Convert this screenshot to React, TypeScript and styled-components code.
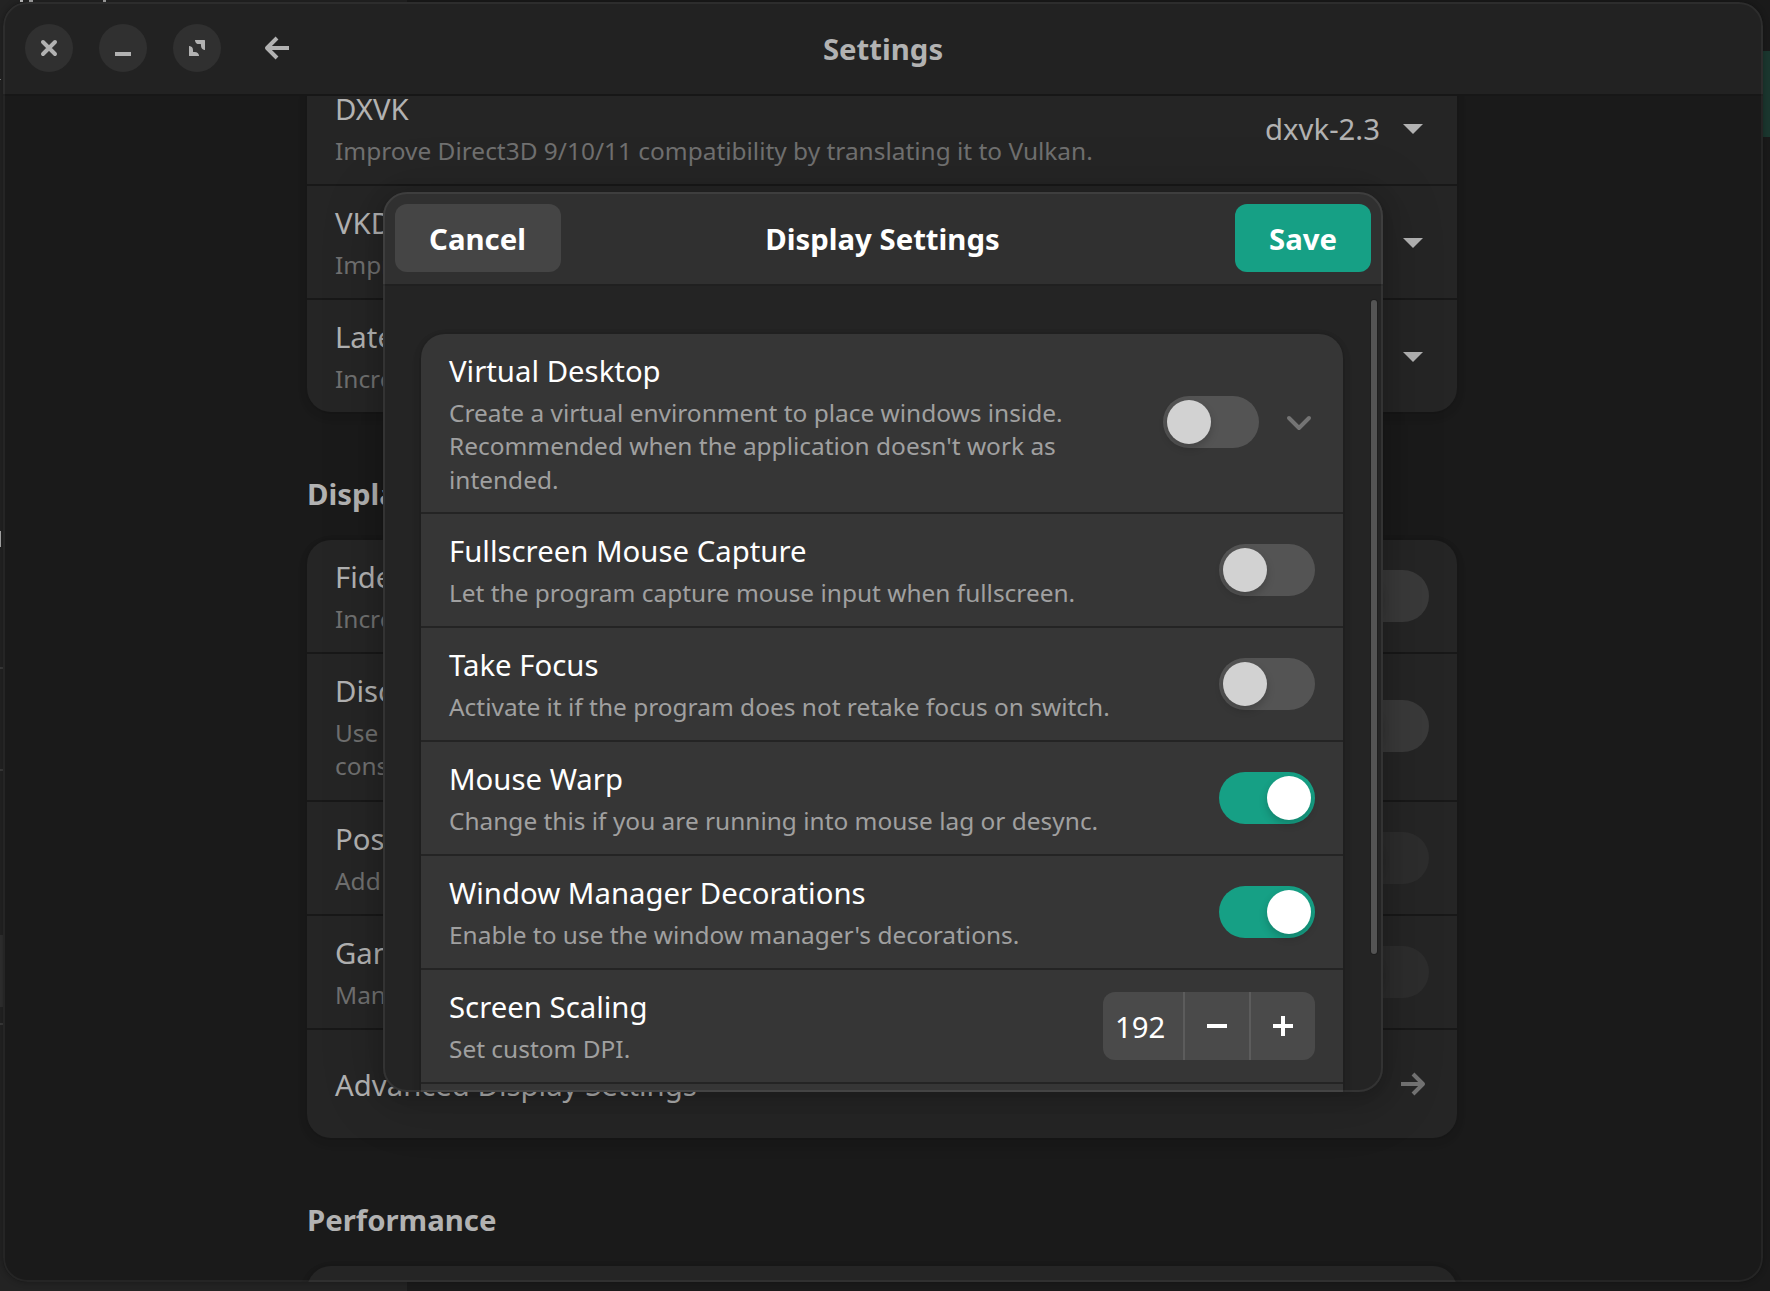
import React from "react";
import styled, { createGlobalStyle, css } from "styled-components";

const Global = createGlobalStyle`
  *, *::before, *::after { box-sizing: border-box; }
  body {
    margin: 0;
    background: #1b1b1b;
    font-family: "Noto Sans", "Open Sans", sans-serif;
    font-size: 29.33px;
    line-height: 40px;
    color: #fff;
    overflow: hidden;
  }
  button { font: inherit; color: inherit; border: 0; margin: 0; }
`;

const Desktop = styled.div`
  position: relative;
  width: 1770px;
  height: 1291px;
  padding: 2px 7px 9px 3px;
  overflow: hidden;
  background: linear-gradient(90deg, #232323 407px, #1a1a1a 407px);
`;

const Scrap = styled.span<{ $x: number; $y: number; $w: number; $h: number; $c: string }>`
  position: absolute;
  left: ${(p) => p.$x}px;
  top: ${(p) => p.$y}px;
  width: ${(p) => p.$w}px;
  height: ${(p) => p.$h}px;
  background: ${(p) => p.$c};
`;

const Window = styled.div`
  position: relative;
  display: flex;
  flex-direction: column;
  height: 1280px;
  border-radius: 24px;
  overflow: hidden;
  background: #1a1a1a;
  box-shadow: 0 0 6px rgba(0, 0, 0, 0.3);
  &::after {
    content: "";
    position: absolute;
    inset: 0;
    border-radius: 24px;
    border: 2px solid rgba(255, 255, 255, 0.05);
    pointer-events: none;
  }
`;

const HeaderBar = styled.header`
  display: grid;
  grid-template-columns: 1fr auto 1fr;
  align-items: center;
  flex: none;
  height: 94px;
  padding: 0 22px;
  border-bottom: 2px solid #171717;
  background: #222222;
  color: #b2b2b2;
`;

const Controls = styled.div`
  display: flex;
  align-items: center;
  gap: 26px;
`;

const RoundButton = styled.button`
  display: grid;
  place-items: center;
  width: 48px;
  height: 48px;
  padding: 0;
  border-radius: 50%;
  background: #303030;
`;

const FlatButton = styled(RoundButton)`
  margin-left: 6px;
  background: none;
`;

const Title = styled.h1`
  margin: 0;
  padding-top: 2px;
  font-size: inherit;
  font-weight: 700;
`;

const PageClip = styled.div`
  flex: 1;
  min-height: 0;
  overflow: hidden;
`;

const Page = styled.main`
  display: flow-root;
  width: 1150px;
  margin: -24px 0 0 304px;
  color: #b2b2b2;
`;

const Heading = styled.h2`
  margin: 62px 0 26px;
  font-size: inherit;
  font-weight: 700;
`;

const List = styled.section<{ $dim?: boolean }>`
  border-radius: 24px;
  overflow: hidden;
  background: ${(p) => (p.$dim ? "#252525" : "#363636")};
  box-shadow: 0 0 0 2px rgba(0, 0, 0, 0.03), 0 2px 6px 2px rgba(0, 0, 0, 0.06),
    0 4px 12px 4px rgba(0, 0, 0, 0.02);
  --line: ${(p) => (p.$dim ? "#181818" : "#242424")};
  --sub: ${(p) => (p.$dim ? "#707070" : "#a0a0a0")};
`;

const Row = styled.div<{ $h?: number; $raised?: boolean }>`
  display: flex;
  align-items: center;
  gap: 24px;
  box-sizing: content-box;
  height: ${(p) => (p.$h ?? 112) - (p.$raised ? 2 : 0)}px;
  padding: 0 28px ${(p) => (p.$raised ? 2 : 0)}px;
  &:not(:first-child) {
    border-top: 2px solid var(--line);
  }
`;

const Labels = styled.div<{ $single?: boolean }>`
  display: flex;
  flex-direction: column;
  flex: 1;
  gap: 5px;
  min-width: 0;
  ${(p) =>
    p.$single
      ? css`
          padding-top: 2px;
        `
      : css`
          align-self: flex-start;
          padding-top: 17px;
        `}
`;

const Subtitle = styled.div`
  font-size: 24.44px;
  line-height: 33.3px;
  color: var(--sub);
  white-space: pre;
`;

const Track = styled.button<{ $on?: boolean; $tone: "live" | "dim" | "off" }>`
  display: flex;
  flex: none;
  justify-content: ${(p) => (p.$on ? "flex-end" : "flex-start")};
  width: 96px;
  height: 52px;
  padding: 4px;
  border-radius: 26px;
  background: ${(p) =>
    p.$on ? "#16a085" : { live: "#545454", dim: "#3a3a3a", off: "#2d2d2d" }[p.$tone]};
`;

const Knob = styled.span<{ $on?: boolean }>`
  width: 44px;
  height: 44px;
  border-radius: 50%;
  background: ${(p) => (p.$on ? "#fff" : "#d2d2d2")};
  box-shadow: 0 4px 8px rgba(0, 0, 0, 0.2);
`;

const Overlay = styled.div`
  position: absolute;
  inset: 0;
  display: grid;
  place-items: center;
`;

const Dialog = styled.div`
  position: relative;
  display: flex;
  flex-direction: column;
  width: 1000px;
  height: 900px;
  border-radius: 24px;
  overflow: hidden;
  background: #242424;
`;

const DialogShadow = styled.div`
  position: relative;
  border-radius: 24px;
  box-shadow: 0 4px 16px 4px rgba(0, 0, 0, 0.14), 0 6px 56px 10px rgba(0, 0, 0, 0.13);
  &::after {
    content: "";
    position: absolute;
    inset: 0;
    border-radius: 24px;
    border: 2px solid rgba(255, 255, 255, 0.07);
    pointer-events: none;
  }
`;

const DialogBar = styled.header`
  display: grid;
  grid-template-columns: 1fr auto 1fr;
  align-items: center;
  flex: none;
  height: 94px;
  padding: 0 12px;
  border-bottom: 2px solid #202020;
  background: #303030;
`;

const DialogTitle = styled(Title)`
  padding-right: 1px;
`;

const TextButton = styled.button<{ $w: number; $accent?: boolean }>`
  width: ${(p) => p.$w}px;
  height: 68px;
  padding: 2px 1px 0 0;
  border-radius: 12px;
  font-weight: 700;
  background: #454545;
  ${(p) =>
    p.$accent &&
    css`
      justify-self: end;
      padding-right: 0;
      background: #16a085;
    `}
`;

const DialogBody = styled.div`
  display: grid;
  grid-template-columns: 922px 6px;
  column-gap: 28px;
  align-items: start;
  flex: 1;
  min-height: 0;
  padding: 14px 0 0 38px;
  overflow: hidden;
`;

const DialogList = styled.div`
  padding-top: 34px;
`;

const Thumb = styled.div`
  width: 6px;
  height: 654px;
  border-radius: 3px;
  background: #545454;
  box-shadow: 0 0 0 1px #1e1e1e;
`;

const Spin = styled.div`
  display: grid;
  grid-template-columns: 80px 66px 66px;
  flex: none;
  height: 68px;
  border-radius: 12px;
  overflow: hidden;
  background: #4a4a4a;
`;

const SpinValue = styled.span`
  align-self: center;
  padding: 2px 0 0 12px;
`;

const SpinButton = styled.button`
  display: grid;
  place-items: center;
  padding: 0;
  background: none;
  border-left: 2px solid #5c5c5c;
`;

const Choice = styled.span`
  display: flex;
  align-items: center;
  gap: 17px;
`;

const ChoiceText = styled.span`
  padding-top: 2px;
`;

const Svg = styled.svg`
  display: block;
  flex: none;
  width: 32px;
  height: 32px;
`;

const paths = {
  close: <path d="M5 5l6 6M11 5l-6 6" stroke="currentColor" strokeWidth="2" strokeLinecap="round" />,
  minimize: <path d="M4 10h8v2H4z" fill="currentColor" />,
  restore: (
    <path
      d="M7 4h4.700q.3 0 .3.300V9h-.2Q10 8.600 10 6.900V6.300q0-.3-.3-.3H9.100Q7.200 6 7 4.200zM4 7h.2Q6 7.300 6 9.100v.6q0 .3.3.3h.6Q8.700 10 9 11.800v.2H4.300Q4 12 4 11.700z"
      fill="currentColor"
    />
  ),
  back: <path d="M14 8H3.500M8 3L3 8l5 5" stroke="currentColor" strokeWidth="2" strokeLinejoin="round" />,
  forward: <path d="M2 8h10.500M8 3l5 5-5 5" stroke="currentColor" strokeWidth="2" strokeLinejoin="round" />,
  caret: <path d="M3 6h10l-5 5z" fill="currentColor" />,
  chevron: (
    <path d="M3 6l5 5 5-5" stroke="currentColor" strokeWidth="2" strokeLinecap="round" strokeLinejoin="round" />
  ),
  minus: <path d="M3 7h10v2H3z" fill="currentColor" />,
  plus: <path d="M3 7h4V3h2v4h4v2H9v4H7V9H3z" fill="currentColor" />,
};

const Icon = ({ name, color }: { name: keyof typeof paths; color?: string }) => (
  <Svg viewBox="0 0 16 16" fill="none" color={color}>
    {paths[name]}
  </Svg>
);

const Switch = ({ on, tone = "live" }: { on?: boolean; tone?: "live" | "dim" | "off" }) => (
  <Track $on={on} $tone={tone}>
    <Knob $on={on} />
  </Track>
);

const Item = (p: {
  title: string;
  sub?: string;
  h?: number;
  raised?: boolean;
  children?: React.ReactNode;
}) => (
  <Row $h={p.h} $raised={p.raised}>
    <Labels $single={!p.sub}>
      <div>{p.title}</div>
      {p.sub && <Subtitle>{p.sub}</Subtitle>}
    </Labels>
    {p.children}
  </Row>
);

export default function App() {
  return (
    <Desktop>
      <Global />
      <Scrap $x={20} $y={0} $w={3} $h={2} $c="#c0c0c0" />
      <Scrap $x={29} $y={0} $w={4} $h={2} $c="#a8a8a8" />
      <Scrap $x={103} $y={0} $w={3} $h={2} $c="#a8a8a8" />
      <Scrap $x={0} $y={79} $w={1} $h={1} $c="#777" />
      <Scrap $x={0} $y={531} $w={1} $h={16} $c="#aaa" />
      <Scrap $x={0} $y={667} $w={3} $h={2} $c="#3a3a3a" />
      <Scrap $x={0} $y={769} $w={3} $h={2} $c="#3a3a3a" />
      <Scrap $x={0} $y={935} $w={3} $h={72} $c="#303030" />
      <Scrap $x={0} $y={1023} $w={3} $h={2} $c="#3a3a3a" />
      <Scrap $x={1763} $y={51} $w={7} $h={86} $c="#1b372f" />
      <Window>
        <HeaderBar>
          <Controls>
            <RoundButton><Icon name="close" /></RoundButton>
            <RoundButton><Icon name="minimize" /></RoundButton>
            <RoundButton><Icon name="restore" /></RoundButton>
            <FlatButton><Icon name="back" /></FlatButton>
          </Controls>
          <Title>Settings</Title>
        </HeaderBar>
        <PageClip>
          <Page>
            <List $dim>
              <Item title="DXVK" sub="Improve Direct3D 9/10/11 compatibility by translating it to Vulkan.">
                <Choice>
                  <ChoiceText>dxvk-2.3</ChoiceText>
                  <Icon name="caret" />
                </Choice>
              </Item>
              <Item title="VKD3D" sub="Improve Direct3D 12 compatibility by translating it to Vulkan.">
                <Icon name="caret" />
              </Item>
              <Item title="LatencyFleX" sub="Increase responsiveness. Can be detected by some anti-cheats.">
                <Icon name="caret" />
              </Item>
            </List>
            <Heading>Display</Heading>
            <List $dim>
              <Item title="FidelityFX Super Resolution" sub="Increase performance at the expense of visuals.">
                <Switch tone="dim" />
              </Item>
              <Item
                raised
                h={146}
                title="Discrete Graphics"
                sub={"Use the discrete graphics card to increase performance at the expense of power\nconsumption."}
              >
                <Switch tone="dim" />
              </Item>
              <Item title="Post-Processing Effects" sub="Add various post-processing effects using vkBasalt.">
                <Switch tone="off" />
              </Item>
              <Item title="Gamescope" sub="Manage how games should be displayed.">
                <Switch tone="off" />
              </Item>
              <Item h={108} title="Advanced Display Settings">
                <Icon name="forward" color="#737373" />
              </Item>
            </List>
            <Heading>Performance</Heading>
            <List $dim>
              <Row />
            </List>
          </Page>
        </PageClip>
        <Overlay>
          <DialogShadow>
            <Dialog>
              <DialogBar>
                <TextButton $w={166}>Cancel</TextButton>
                <DialogTitle>Display Settings</DialogTitle>
                <TextButton $w={136} $accent>Save</TextButton>
              </DialogBar>
              <DialogBody>
                <DialogList>
                  <List>
                    <Item
                      raised
                      h={178}
                      title="Virtual Desktop"
                      sub={"Create a virtual environment to place windows inside.\nRecommended when the application doesn't work as\nintended."}
                    >
                      <Switch />
                      <Icon name="chevron" color="#747474" />
                    </Item>
                    <Item title="Fullscreen Mouse Capture" sub="Let the program capture mouse input when fullscreen.">
                      <Switch />
                    </Item>
                    <Item title="Take Focus" sub="Activate it if the program does not retake focus on switch.">
                      <Switch />
                    </Item>
                    <Item title="Mouse Warp" sub="Change this if you are running into mouse lag or desync.">
                      <Switch on />
                    </Item>
                    <Item title="Window Manager Decorations" sub="Enable to use the window manager's decorations.">
                      <Switch on />
                    </Item>
                    <Item title="Screen Scaling" sub="Set custom DPI.">
                      <Spin>
                        <SpinValue>192</SpinValue>
                        <SpinButton><Icon name="minus" /></SpinButton>
                        <SpinButton><Icon name="plus" /></SpinButton>
                      </Spin>
                    </Item>
                    <Row />
                  </List>
                </DialogList>
                <Thumb />
              </DialogBody>
            </Dialog>
          </DialogShadow>
        </Overlay>
      </Window>
    </Desktop>
  );
}
